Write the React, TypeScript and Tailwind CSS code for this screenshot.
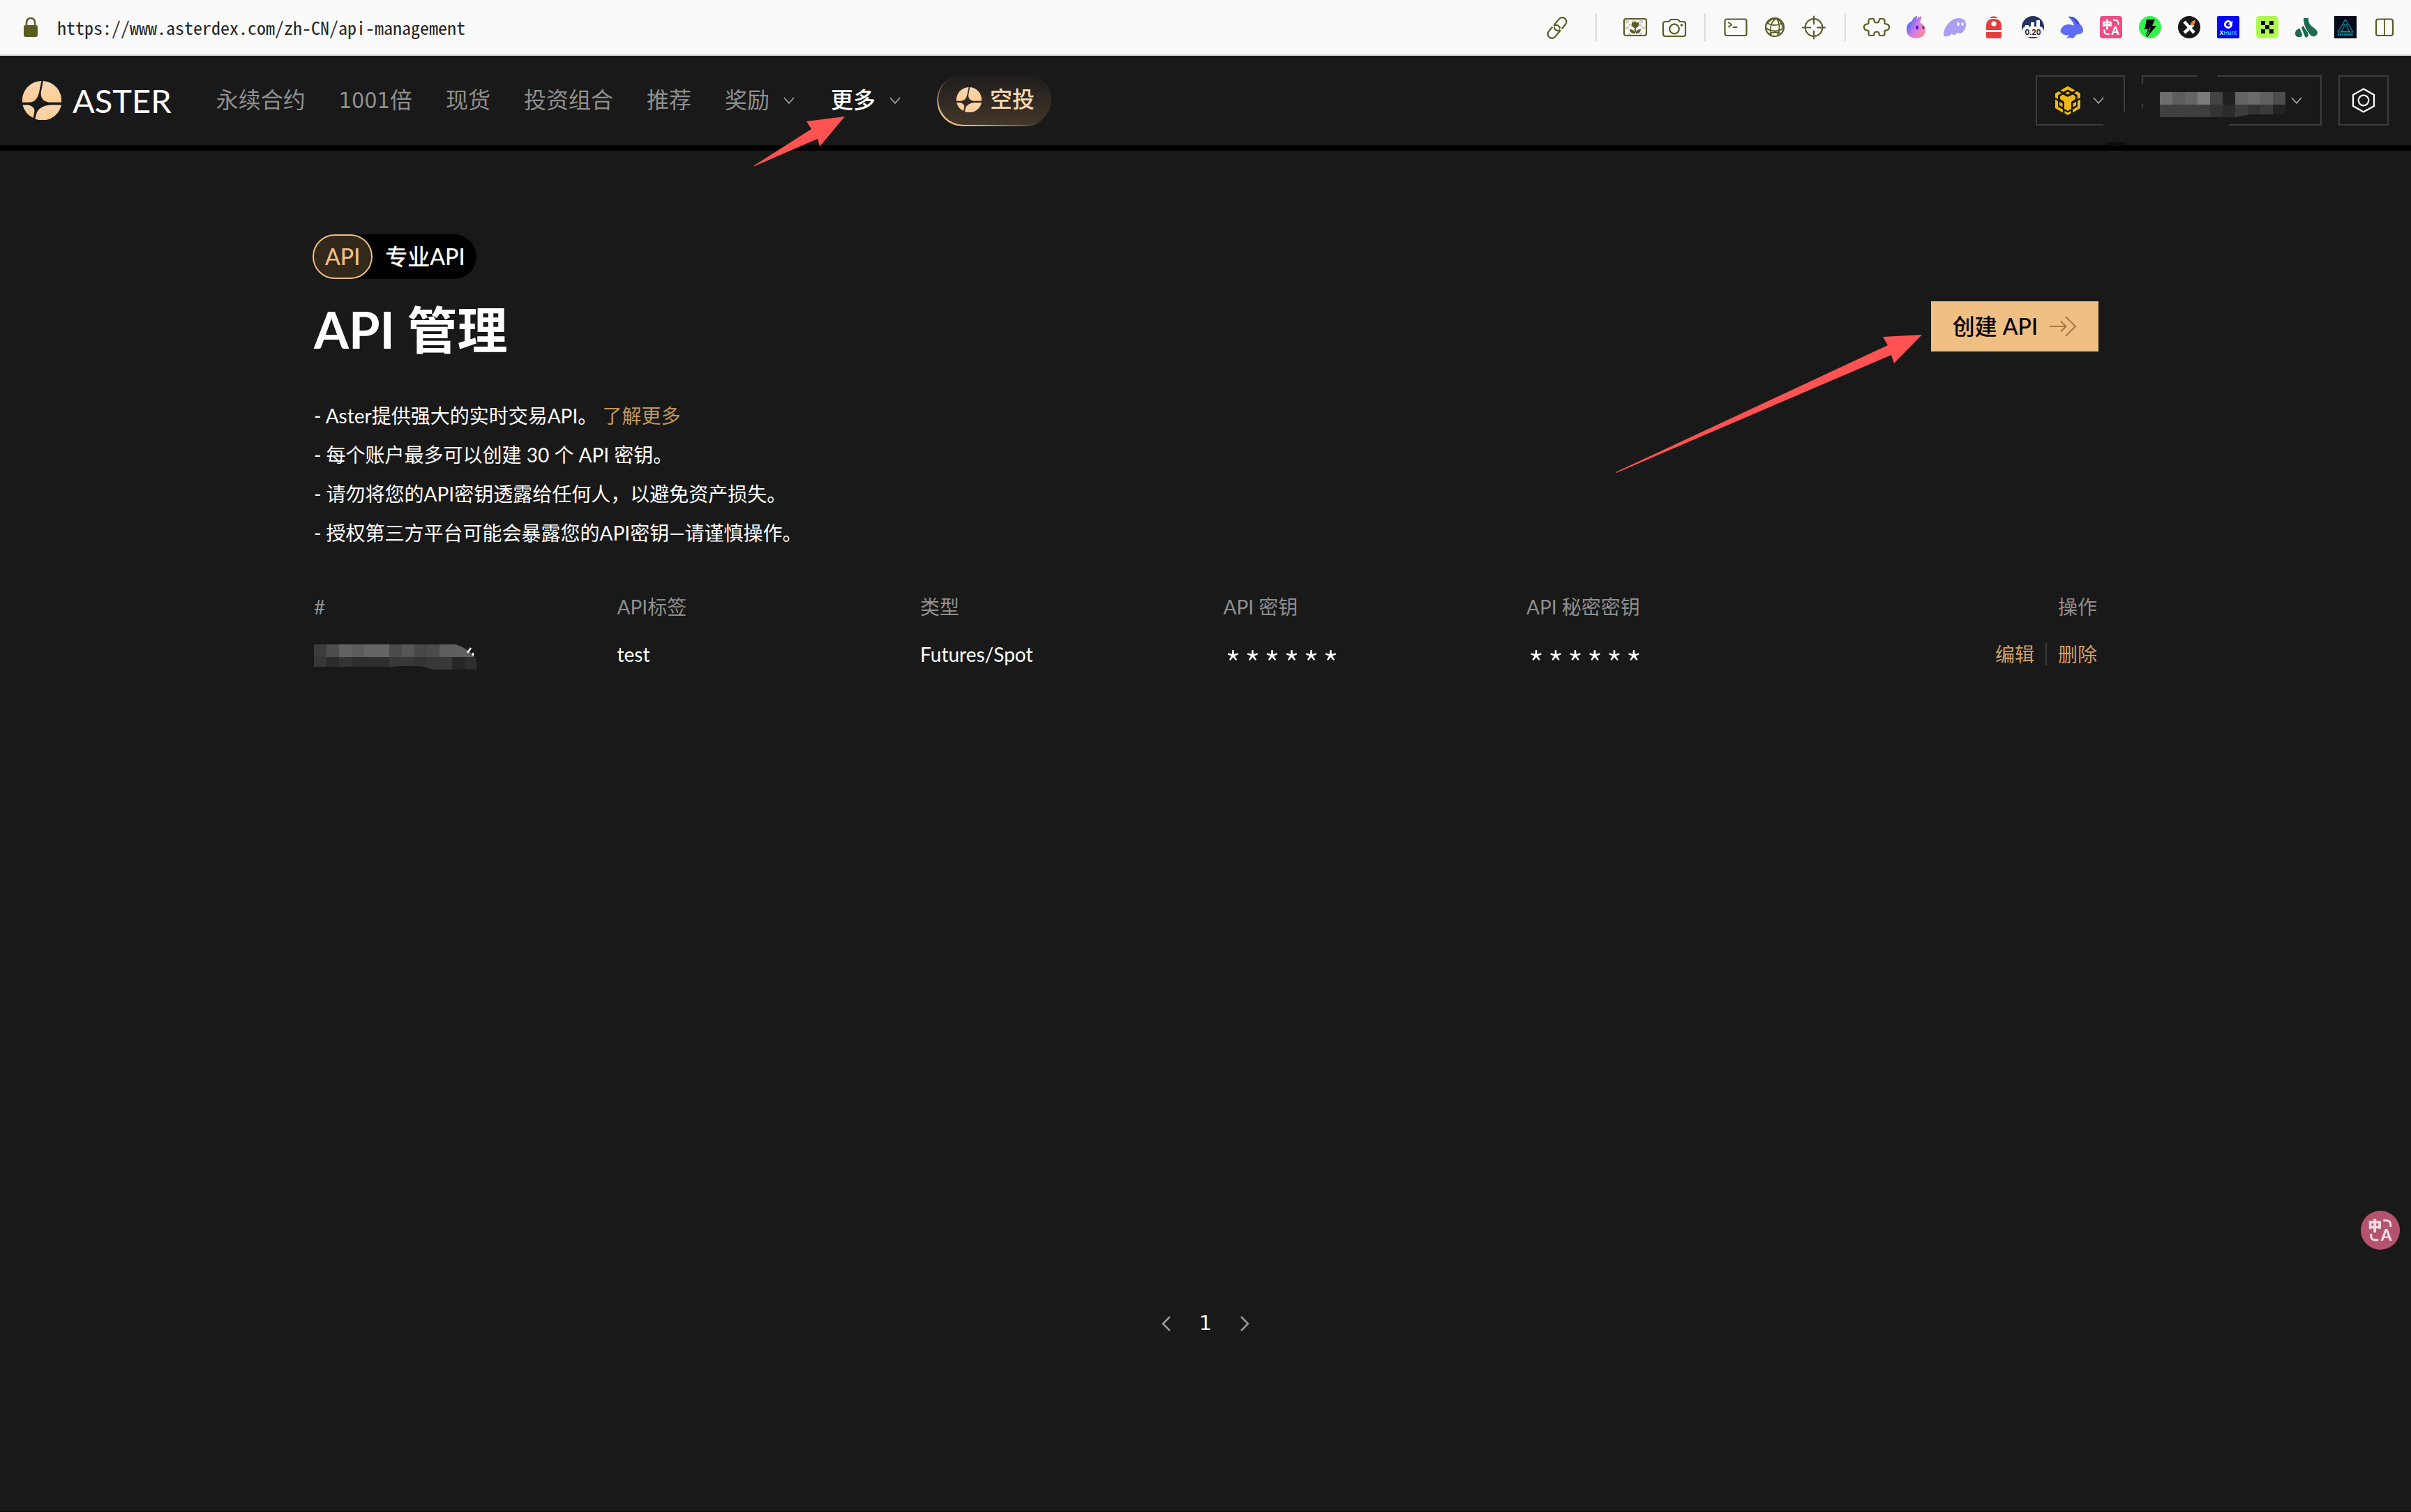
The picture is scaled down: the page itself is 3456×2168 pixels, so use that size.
import type { ReactNode } from 'react';

/**
 * API management page: browser toolbar, site header, key table.
 * Two marker arrows point at the "更多" menu and the create button.
 */

const NAV = ['永续合约', '1001倍', '现货', '投资组合', '推荐'] as const;

const COLUMNS = ['API标签', '类型', 'API 密钥', 'API 秘密密钥'] as const;

/** The Aster mark: a disc cut into four petals by a leaning star. */
function AsterMark({ className }: { className: string }) {
  return (
    <svg viewBox="0 0 56 56" className={className} aria-hidden>
      <defs>
        <linearGradient id="aster" x1="0" y1="0" x2="0.2" y2="1">
          <stop offset="0" stopColor="#f3d7b6" />
          <stop offset="1" stopColor="#ffcd94" />
        </linearGradient>
      </defs>
      <g fill="url(#aster)">
        <path d="M0 30.7A28 28 0 0 1 27.4 0L24 16.5C22 25 18 30 10.6 30.7Z" />
        <path d="M29.8 0A28 28 0 0 1 56 30.7H38C30 29.5 26.5 25 26.6 17.3Z" />
        <path d="M56 34.5A28 28 0 0 1 18.4 54.6L20.3 46.5C23 39.5 30 35.2 40 34.5Z" />
        <path d="M.4 34.5H8C14 35.5 18.3 39 17.3 44.5L15.6 53A28 28 0 0 1 .4 34.5Z" />
      </g>
    </svg>
  );
}

function Chevron() {
  return (
    <svg viewBox="0 0 24 24" className="h-6 w-6" fill="none" stroke="#a3a3a3" strokeWidth="1.8" aria-hidden>
      <path d="M5 8l7 8 7-8" />
    </svg>
  );
}

/** One 56px slot of the browser toolbar. */
function Tool({ label, children }: { label: string; children: ReactNode }) {
  return (
    <button type="button" aria-label={label} className="flex h-14 w-14 items-center justify-center">
      <svg viewBox="0 0 40 40" className="h-10 w-10" fill="none" stroke="#5b5b24" strokeWidth="2.2" strokeLinecap="round" strokeLinejoin="round">
        {children}
      </svg>
    </button>
  );
}

function Translate() {
  return (
    <g>
      <text x="7.500" y="21" fontSize="14" fontWeight="900" fontFamily="Noto Sans CJK SC" fill="#fff" stroke="#fff" strokeWidth="0.500">中</text>
      <text x="20.500" y="31" fontSize="16" fontWeight="900" fontFamily="Lato" fill="#fff" stroke="none">A</text>
      <path d="M23 10h3.500a4 4 0 0 1 4 4v2.500M10.500 23.500V26a4 4 0 0 0 4 4H18" stroke="#fff" strokeWidth="2.200" strokeLinecap="butt" />
    </g>
  );
}

function Toolbar() {
  return (
    <div className="flex h-20 items-center border-b-2 border-[#dcdcdc] bg-[#fafafa] pl-8 pr-[10px]">
      <svg viewBox="0 0 24 30" className="h-[30px] w-6" aria-hidden>
        <path d="M6 13V8a6 6 0 0 1 12 0v5" fill="none" stroke="#5b5b24" strokeWidth="2.6" />
        <rect x="2" y="12" width="20" height="17" rx="3" fill="#5b5b24" />
      </svg>
      <input
        aria-label="地址"
        readOnly
        value="https://www.asterdex.com/zh-CN/api-management"
        className="ml-[26px] min-w-0 flex-1 bg-transparent font-['Noto_Sans_Mono_CJK_SC','Liberation_Mono',monospace] text-[26px] leading-10 text-[#242424] outline-none"
      />

      <Tool label="复制链接">
        <g transform="translate(20 21) rotate(-50)">
          <rect x="-17.500" y="-6" width="21" height="12" rx="6" />
          <rect x="-3.500" y="-6" width="21" height="12" rx="6" />
          <path d="M-2 -8v4M2 8v-4" stroke="#fafafa" strokeWidth="2.500" strokeLinecap="butt" />
        </g>
      </Tool>
      <span className="mx-[27px] h-10 w-0.5 bg-[#dcdcdc]" />
      <Tool label="图片">
        <path d="M6 10h5v4H6zM16 10h4v4h-4zM26 10h5v4h-5zM6 19h5v4H6zM29 19h5v4h-5zM10 28h4v4h-4zM26 28h4v4h-4zM11 15h4v4h-4zM25 15h4v4h-4z" fill="#cfcfc6" stroke="none" />
        <rect x="4" y="8" width="32" height="24" rx="3" />
        <path d="M15 12l2.500 2 2.500-3 2.500 3 2.500-2v5a5 4 0 0 1-10 0zM19 20h2v9h-2zM12 23c4 0 7 2 8 6-4 1-8-2-8-6zM28 23c-4 0-7 2-8 6 4 1 8-2 8-6z" fill="#5b5b24" stroke="none" />
      </Tool>
      <Tool label="截图">
        <path d="M7 12h5l3-3h10l3 3h5a3 3 0 0 1 3 3v15a3 3 0 0 1-3 3H7a3 3 0 0 1-3-3V15a3 3 0 0 1 3-3z" />
        <circle cx="20" cy="22.500" r="6.800" />
        <circle cx="30.500" cy="17" r="1.400" fill="#5b5b24" strokeWidth="1" />
      </Tool>
      <span className="mx-[15px] h-10 w-0.5 bg-[#dcdcdc]" />
      <Tool label="终端">
        <rect x="4.500" y="8.500" width="31" height="23.500" rx="2.500" />
        <path d="M10 13.500l4 3-4 3M16.500 20h5" strokeWidth="2" />
      </Tool>
      <Tool label="网络">
        <circle cx="20" cy="20" r="13" />
        <path d="M22 7c-7 5-10 14-7 25M22 7c5 6 6 16 2 25M22 7c-6 0-11 5-14 9M22 7c5 2 8 7 10 15M9 14c7 4 15 4 22 0M7 21c8 6 18 6 26 0M11 29c6-2 12-2 18 0" strokeWidth="1.800" />
      </Tool>
      <Tool label="定位">
        <circle cx="20" cy="20.500" r="12.300" />
        <path d="M20 4.500v11M20 25.500v11M4 20.500h11M25 20.500h11" />
      </Tool>
      <span className="mx-4 h-10 w-0.5 bg-[#dcdcdc]" />
      <Tool label="扩展">
        <path d="M11 8h4.500c.8 0 .8.600.8 1.500 0 2.500 1.500 4 3.700 4s3.700-1.500 3.700-4c0-.9 0-1.500.8-1.500H29c1.500 0 2.500 1 2.500 2.500V14c0 1 .5 1.300 1.500 1.400 3 .2 5 2 5 4.600s-2 4.400-5 4.600c-1 .1-1.500.4-1.500 1.400v3.500c0 1.500-1 2.500-2.500 2.500h-4.500c-.8 0-.8-.6-.8-1.500 0-2.500-1.500-4-3.700-4s-3.700 1.500-3.700 4c0 .9 0 1.500-.8 1.500H11c-1.500 0-2.500-1-2.500-2.500V26c0-1-.5-1.300-1.500-1.400-3-.2-5-2-5-4.600s2-4.400 5-4.600c1-.1 1.500-.4 1.500-1.400v-3.500C8.500 9 9.500 8 11 8z" />
      </Tool>
      <Tool label="Rainbow">
        <defs>
          <linearGradient id="bunny" x1="0" y1="0.200" x2="1" y2="0.800">
            <stop offset="0.150" stopColor="#5a6cf5" />
            <stop offset="0.500" stopColor="#d77be6" />
            <stop offset="1" stopColor="#ff8f8a" />
          </linearGradient>
        </defs>
        <path d="M7 24c0-7 3-11 7.500-12.500C16 7 19 4 22 4c.5 2-.5 5-2 7 2-4 5-6.500 8-6.500.8 2-.5 6-2.500 8.500C31 15.500 34 20 34 25c0 7-6 11-13.500 11S7 31 7 24z" fill="url(#bunny)" stroke="none" />
        <ellipse cx="22" cy="20.500" rx="2" ry="3" fill="#4a22c8" stroke="none" />
        <ellipse cx="31" cy="20.500" rx="1.400" ry="2.600" fill="#4a22c8" stroke="none" />
      </Tool>
      <Tool label="Phantom">
        <path d="M4 30C4 20 14 7 26 7c7 0 10 4 10 9 0 7-5 13-9 13-2 0-3-1-3-2-1 2-3 4-5 4s-3-1-3-2c-2 2-4 4-7 4-3 1-5 0-5-3z" fill="#ab9ff2" stroke="none" />
        <ellipse cx="25" cy="15.500" rx="1.700" ry="2.600" fill="#fff" stroke="none" />
        <ellipse cx="31" cy="15.500" rx="1.700" ry="2.600" fill="#fff" stroke="none" />
      </Tool>
      <Tool label="Backpack">
        <path d="M15 6c1-2 9-2 10 0v1H15zM9 18c0-7 4-10 11-10s11 3 11 10v6H9zM9 27h22v7a2 2 0 0 1-2 2H11a2 2 0 0 1-2-2z" fill="#e33e3f" stroke="none" />
        <circle cx="20" cy="15" r="3.600" fill="#fff" stroke="none" />
      </Tool>
      <Tool label="Gas 0.20">
        <circle cx="20" cy="20" r="16" fill="#22335d" stroke="none" />
        <path d="M9 22v-5h5v5zM17 22v-9h5v9zM25 22V10h5v12z" fill="#fff" stroke="none" />
        <rect x="5" y="19" width="30" height="15" rx="5" fill="#f4f4f4" stroke="none" />
        <text x="20" y="30.500" fontSize="10" fontWeight="700" fontFamily="Inter" textAnchor="middle" fill="#222" stroke="none">0.20</text>
      </Tool>
      <Tool label="Rabby">
        <path d="M4 24c1-5 6-8 11-8 4 0 7 1 8 2-1-6-5-9-8-13 6-1 13 3 15 10 4 2 6 6 6 10 0 3-3 5-8 5l-3 2-3 4-5-1-5 1 4-5c-4 1-8 0-10-2-2-1-3-3-2-5z" fill="#5c6cf6" stroke="none" />
        <path d="M15 5c7-1 14 4 16 11l-4-1C25 11 20 7 15 5z" fill="#3f4bc4" stroke="none" />
      </Tool>
      <Tool label="翻译">
        <rect x="4" y="4" width="32" height="32" rx="4" fill="#e94f86" stroke="none" />
        <Translate />
      </Tool>
      <Tool label="Flash">
        <circle cx="20" cy="20" r="16" fill="#35f04c" stroke="none" />
        <path d="M15 9h12l-4 9h6L16 34l-2-2 3-9h-5z" fill="#0a0a0a" stroke="none" />
        <path d="M20 21l-4 11" stroke="#35f04c" strokeWidth="1" />
      </Tool>
      <Tool label="X">
        <circle cx="20" cy="20" r="16" fill="#171717" stroke="none" />
        <path d="M13 12l14 16M26 16L13 28" stroke="#fff" strokeWidth="4.500" strokeLinecap="butt" />
        <path d="M22 16c1-4 3-6 7-6 0 4-1 6-5 8z" fill="#ef7a3a" stroke="none" />
      </Tool>
      <Tool label="XHunt">
        <rect x="4" y="4" width="32" height="32" rx="2" fill="#0208f4" stroke="none" />
        <circle cx="20" cy="16" r="4.500" stroke="#fff" strokeWidth="3" />
        <path d="M19 16l8-5-2 6z" fill="#fff" stroke="none" />
        <text x="20" y="31" fontSize="8" fontWeight="700" fontFamily="Inter" textAnchor="middle" fill="#fff" stroke="none">
          X<tspan fill="#3ab8ff">Hunt</tspan>
        </text>
      </Tool>
      <Tool label="OKX">
        <rect x="4" y="4" width="32" height="32" rx="5" fill="#b0f94f" stroke="none" />
        <path d="M11 11h6v6h6v-6h6v6h-6v6h6v6h-6v-6h-6v6h-6v-6h6v-6h-6z" fill="#0a0a0a" stroke="none" />
      </Tool>
      <Tool label="Keplr">
        <path d="M16 7h7c0 6 1 8 5 12 4 3 8 5 8 9.500a6 6 0 0 1-10 3c-4-5-10-12-10-24.500z" fill="#1c6b52" stroke="none" />
        <path d="M4 29c0-4 3-7 7-7 1 5 3 7 3 9 0 3-2 3-5 3s-5-2-5-5zM13 20l3-2c2 6 7 9 7 13 0 3-3 4-5 3-1-5-4-9-5-14z" fill="#1c6b52" stroke="none" />
      </Tool>
      <Tool label="Quant">
        <rect x="4" y="4" width="32" height="32" fill="#020a1c" stroke="none" />
        <path d="M20 9l11 18H9zM18 16v4l-4 6h12l-4-6v-4z" stroke="#1796a6" strokeWidth="1.200" />
        <path d="M9 30.500h22" stroke="#1796a6" strokeWidth="3" strokeDasharray="2 1" strokeLinecap="butt" />
      </Tool>
      <Tool label="分栏">
        <rect x="8" y="8.500" width="24" height="23.500" rx="3" />
        <path d="M20 9v23" strokeWidth="1.800" />
      </Tool>
    </div>
  );
}

/** Pixelated wallet address, 18px blocks in two rows. */
function AddressMosaic() {
  const top = ['#6e6e6e', '#5d5d5d', '#646464', '#7b7b7b', '#434343', '#202020', '#636363', '#6a6a6a', '#606060', '#4c4c4c'];
  const low = ['#404040', '#404040', '#3e3e3e', '#3e3e3e', '#343434', '#2b2b2b', '#3d3d3d', '#333333', '#3b3b3b', '#232323'];
  return (
    <svg viewBox="0 0 180 36" className="mt-3 h-9 w-[180px]" aria-hidden>
      <clipPath id="addr">
        <path d="M0 0H180V24Q180 32 164 32L130 32 108 36H0Z" />
      </clipPath>
      <g clipPath="url(#addr)">
        {top.map((c, i) => <rect key={i} x={i * 18} width="18" height="18" fill={c} />)}
        {low.map((c, i) => <rect key={i} x={i * 18} y="18" width="18" height="18" fill={c} />)}
      </g>
    </svg>
  );
}

/** Pixelated row id. */
function IdMosaic() {
  const top = ['#3c3c3c', '#4e4e4e', '#626262', '#5b5b5b', '#656565', '#656565', '#4b4b4b', '#565656', '#474747', '#4b4b4b', '#5e5e5e', '#606060', '#606060'];
  const low = ['#373737', '#2c2c2c', '#343434', '#2e2e2e', '#2e2e2e', '#2e2e2e', '#383838', '#383838', '#343434', '#383838', '#383838', '#262626', '#2e2e2e'];
  return (
    <svg viewBox="0 0 234 36" className="mt-2 h-9 w-[234px]" role="img" aria-label="已隐藏">
      <clipPath id="rowid">
        <path d="M0 0H203Q222 6 232 20L234 36H170Q154 28 112 32H0Z" />
      </clipPath>
      <g clipPath="url(#rowid)">
        {top.map((c, i) => <rect key={i} x={i * 18} width="18" height="18" fill={c} />)}
        {low.map((c, i) => <rect key={i} x={i * 18} y="18" width="18" height="18" fill={c} />)}
      </g>
      <path d="M225 5l-5 7M228 12v4" stroke="#fff" strokeWidth="2.500" />
    </svg>
  );
}

/** Masked secret: one star per 28px cell. */
function Stars() {
  return (
    <div className="flex h-9 font-['Noto_Sans_CJK_SC',sans-serif] text-[52px] font-light leading-[62px]">
      {Array.from({ length: 6 }, (_, i) => (
        <span key={i} className="flex w-7 justify-center">*</span>
      ))}
    </div>
  );
}

function Header() {
  return (
    <header className="flex h-[136px] items-center border-b-8 border-black px-8">
      <a href="#" className="flex items-center gap-4 text-[47px] leading-[56px] text-white">
        <AsterMark className="h-14 w-14" />
        ASTER
      </a>
      <nav className="ml-16 flex items-center gap-12 whitespace-nowrap font-['DejaVu_Sans_Condensed','Noto_Sans_CJK_SC',sans-serif] text-[32px] leading-[48px] text-[#8f8f8f]">
        {NAV.map((item) => (
          <a key={item} href="#">{item}</a>
        ))}
        <button type="button" className="flex items-center gap-4">奖励<Chevron /></button>
        <button type="button" className="flex items-center gap-4 font-medium text-white">更多<Chevron /></button>
        <a href="#" className="rounded-full bg-linear-to-tr from-[#e8b97e] from-15% to-transparent to-55% pb-0.5 pl-0.5">
          <span className="flex h-[72px] items-center gap-3 rounded-full bg-linear-to-b from-[#1e1c1b] to-[#43372a] pl-[26px] pr-6 font-medium text-[#f7d8b4]">
            <AsterMark className="h-9 w-9" />
            空投
          </span>
        </a>
      </nav>

      <div className="relative ml-auto flex gap-6">
        <button type="button" aria-label="BNB Chain" className="flex h-[72px] items-center gap-3 border-2 border-[#3c3c3c] px-6">
          <svg viewBox="0 0 40 44" className="h-11 w-10" fill="#efb919" aria-hidden>
            <path d="M9.500 7.500L20 1.500l10.500 6-4 2.300L20 6.500l-6.500 3.300z" />
            <path d="M16.500 11.500L20 9.500l3.500 2-3.500 2z" />
            <path d="M2 12l5-3 4 2.500-5 3v5.500l-4-2zM38 12l-5-3-4 2.500 5 3v5.500l4-2z" />
            <path d="M9 16l4-2.500 7 3.500 7-3.500 4 2.500v4l-6 4v10l-5 3-5-3V24l-6-4z" />
            <path d="M2 20.500l4 2.500v8l7 4v4.500L2 33zM38 20.500l-4 2.500v8l-7 4v4.500L38 33z" />
            <path d="M8 24l4.500 2.500v5L8 29zM32 24l-4.500 2.500v5L32 29z" />
            <path d="M15.500 37l4.500 2.500 4.500-2.500v3.500L20 43l-4.500-2.500z" />
          </svg>
          <Chevron />
        </button>
        <button type="button" aria-label="钱包" className="flex h-[72px] items-center gap-1 border-2 border-[#3c3c3c] pl-6 pr-[22px]">
          <AddressMosaic />
          <Chevron />
        </button>
        <button type="button" aria-label="设置" className="flex h-[72px] w-[72px] items-center justify-center border-2 border-[#3c3c3c]">
          <svg viewBox="0 0 40 40" className="h-10 w-10" fill="none" stroke="#fff" strokeWidth="2.200" aria-hidden>
            <path d="M20 3.500l15 8.500v16l-15 8.500L5 28V12z" />
            <circle cx="20" cy="20" r="7.300" />
          </svg>
        </button>
        {/* brush smear over the borders around the address */}
        <svg viewBox="0 0 300 110" className="pointer-events-none absolute left-[90px] top-0 h-[110px] w-[300px]" aria-hidden>
          <path d="M6 66Q10 54 36 52H66V62L186 66 188 78 8 76ZM56 12H68V41H56ZM60 46H66V70H60ZM142 0H170V3H142Z" fill="#191919" />
          <path d="M10 96H40Q36 102 24 102 14 102 10 96Z" fill="#0d0d0d" />
        </svg>
      </div>
    </header>
  );
}

export default function App() {
  return (
    <div className="relative min-h-screen border-b-2 border-[#0e090e] bg-[#191919] font-['Lato','Noto_Sans_CJK_SC',sans-serif] text-white">
      <Toolbar />
      <Header />

      <main className="mx-auto max-w-[2560px] pt-[120px]">
        <div className="flex h-16 w-fit items-center rounded-full bg-black pr-4 text-[32px] font-medium leading-10">
          <span className="flex h-16 items-center rounded-full border-2 border-[#efbf84] bg-[#33281c] px-4 text-[#efbf84]">API</span>
          <span className="ml-[18px]">专业API</span>
        </div>

        <div className="mt-8 flex h-[72px] items-center justify-between">
          <h1 className="mt-2 pl-0.5 text-[72px] font-bold leading-[72px]">API 管理</h1>
          <button type="button" className="flex h-[72px] items-center gap-4 bg-[#efbf84] px-[31px] text-[32px] font-medium leading-10 text-black">
            创建 API
            <svg viewBox="0 0 40 32" className="h-8 w-10" fill="none" stroke="#a9763e" strokeWidth="2" aria-hidden>
              <path d="M1 16h24M17 8.500l7.500 7.500-7.500 7.500M24 2l14 14-14 14" />
            </svg>
          </button>
        </div>

        <ul className="mt-16 pl-0.5 text-[28px] leading-[56px]">
          <li>- Aster提供强大的实时交易API。 <a href="#" className="text-[#c2965f]">了解更多</a></li>
          <li>- 每个账户最多可以创建 30 个 API 密钥。</li>
          <li>- 请勿将您的API密钥透露给任何人，以避免资产损失。</li>
          <li>- 授权第三方平台可能会暴露您的API密钥—请谨慎操作。</li>
        </ul>

        <div className="mt-11 min-h-[1034px] px-0.5">
          <table className="w-full table-fixed text-left text-[28px] leading-9">
            <thead className="text-[#8f8f8f]">
              <tr className="h-[68px]">
                <th className="w-[17%] font-normal">#</th>
                {COLUMNS.map((c) => (
                  <th key={c} className="w-[17%] font-normal">{c}</th>
                ))}
                <th className="text-right font-normal">操作</th>
              </tr>
            </thead>
            <tbody>
              <tr className="h-[68px]">
                <td><IdMosaic /></td>
                <td>test</td>
                <td>Futures/Spot</td>
                <td><Stars /></td>
                <td><Stars /></td>
                <td>
                  <div className="flex items-center justify-end gap-4 text-[#cf9f66]">
                    <button type="button">编辑</button>
                    <span className="h-8 w-0.5 bg-[#3c3c3c]" />
                    <button type="button">删除</button>
                  </div>
                </td>
              </tr>
            </tbody>
          </table>
        </div>

        <div className="flex items-center justify-center gap-8 font-['DejaVu_Sans',sans-serif] text-[28px] leading-[56px]">
          <button type="button" aria-label="上一页">
            <svg viewBox="0 0 24 24" className="h-6 w-6" fill="none" stroke="#9a9a9a" strokeWidth="2.500" aria-hidden>
              <path d="M17 2L7 12l10 10" />
            </svg>
          </button>
          <button type="button" className="w-6 text-center">1</button>
          <button type="button" aria-label="下一页">
            <svg viewBox="0 0 24 24" className="h-6 w-6" fill="none" stroke="#9a9a9a" strokeWidth="2.500" aria-hidden>
              <path d="M7 2l10 10L7 22" />
            </svg>
          </button>
        </div>
      </main>

      {/* marker arrows */}
      <svg viewBox="0 0 132 72" className="pointer-events-none absolute left-[1080px] top-[167px] h-[72px] w-[132px]" aria-hidden>
        <path d="M0 71L83 18 76 7 131 0 95 43 92 32 1 71.500Z" fill="#ff5252" />
      </svg>
      <svg viewBox="0 0 440 200" className="pointer-events-none absolute right-[700px] top-[479px] h-[200px] w-[440px]" aria-hidden>
        <path d="M0 198L390 16 383 4 439 1 399 42 395 30 1 199Z" fill="#ff5252" />
      </svg>

      <button type="button" aria-label="翻译" className="fixed bottom-[376px] right-4 flex h-14 w-14 items-center justify-center rounded-full bg-[#b5536f]">
        <svg viewBox="0 0 40 40" className="h-14 w-14 opacity-80" fill="none" aria-hidden>
          <Translate />
        </svg>
      </button>
    </div>
  );
}
